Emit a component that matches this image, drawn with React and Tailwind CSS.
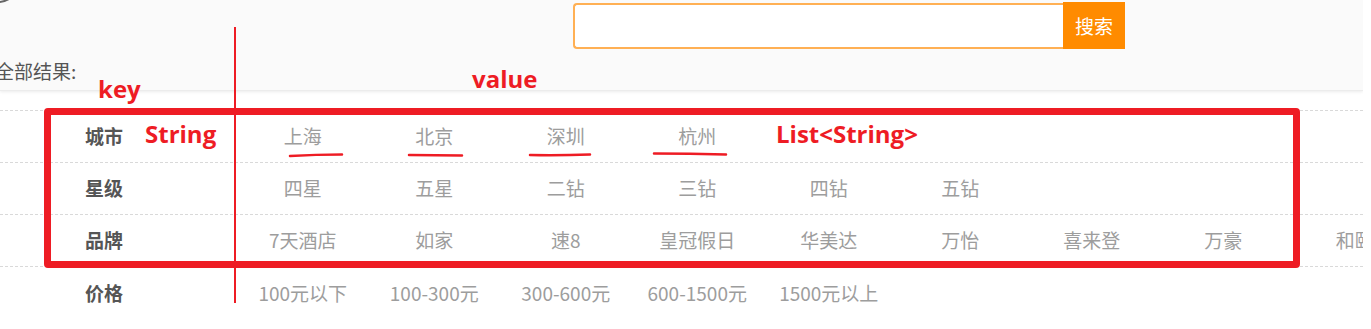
import React from "react";

const Filters = [
  { id: 1, name: "城市", values: ["上海", "北京", "深圳", "杭州"] },
  { id: 2, name: "星级", values: ["四星", "五星", "二钻", "三钻", "四钻", "五钻"] },
  {
    id: 3,
    name: "品牌",
    values: ["7天酒店", "如家", "速8", "皇冠假日", "华美达", "万怡", "喜来登", "万豪", "和颐"],
  },
  { id: 4, name: "价格", values: ["100元以下", "100-300元", "300-600元", "600-1500元", "1500元以上"] },
];

const cjk = "font-['Noto_Sans_CJK_SC',sans-serif]";
const note = "absolute font-['Open_Sans',sans-serif] font-bold text-[24px] leading-none text-[#ee1c24]";

const App = () => {
  return (
    <div className={`relative w-[1371px] h-[329px] overflow-hidden bg-white ${cjk}`}>
      <div className="w-[1363px] overflow-hidden">
        {/* top bar */}
        <div className="flex flex-col h-[91px] bg-[#fafafa] border-b border-[#ececec] shadow-[0_1px_3px_rgba(0,0,0,0.08)]">
          <div className="w-[44px] h-[44px] -mt-[41px] -ml-[24px] shrink-0 rounded-full border-2 border-[#666]" />
          <div className="flex pl-[573px] -mt-[1px]">
            <input
              type="text"
              className="w-[490px] h-[46px] mt-[1px] rounded-l-[4px] border-2 border-r-0 border-[#ffb054] bg-white outline-none"
            />
            <button className="w-[62px] h-[47px] bg-[#ff8b00] text-white text-[19px] leading-none">
              搜索
            </button>
          </div>
          <div className="-ml-[5px] mt-[9px] text-[19px] leading-[26px] text-[#555]">全部结果:</div>
        </div>

        {/* filter rows */}
        <div className="mt-[19px] border-t border-dashed border-[#d9d9d9]">
          {Filters.map((row) => (
            <div
              key={row.id}
              className={`flex items-center h-[52px] whitespace-nowrap ${
                row.id < 4 ? "border-b border-dashed border-[#d9d9d9]" : ""
              }`}
            >
              <div className="w-[237px] shrink-0 pl-[85px] text-[19px] font-bold text-[#555]">
                {row.name}
              </div>
              {row.values.map((v) => (
                <div key={v} className="w-[131.5px] shrink-0 text-center text-[19px] text-[#9d9d9d]">
                  {v}
                </div>
              ))}
            </div>
          ))}
        </div>
      </div>

      {/* red annotations */}
      <div className="absolute left-[44px] top-[108px] w-[1256px] h-[160px] border-[7px] border-[#ee1c24] rounded-[4px]" />
      <div className="absolute left-[234px] top-[27px] w-[2px] h-[276px] bg-[#ee1c24]" />
      <span className={`${note} left-[98px] top-[77px]`}>key</span>
      <span className={`${note} left-[472px] top-[67px]`}>value</span>
      <span className={`${note} left-[145px] top-[122px]`}>String</span>
      <span className={`${note} left-[776px] top-[122px]`}>List&lt;String&gt;</span>
      <svg className="absolute left-0 top-0 pointer-events-none" width="1371" height="329">
        <g stroke="#ee1c24" strokeWidth="2.5" strokeLinecap="round" fill="none">
          <path d="M290 156 Q316 154.5 342 154.5" />
          <path d="M409 155 L462 155.5" />
          <path d="M530 155 Q560 155.5 590 154.5" />
          <path d="M654 153.5 Q690 153.5 726 154.5" />
        </g>
      </svg>
    </div>
  );
};

export default App;
